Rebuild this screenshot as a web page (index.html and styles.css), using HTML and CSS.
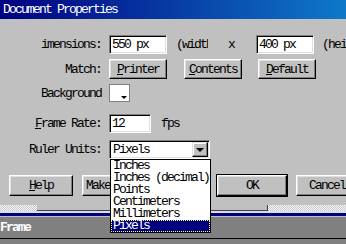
FILE: index.html
```html
<!DOCTYPE html>
<html>

<head>
    <title>Document Properties</title>
    <link rel="stylesheet" href="styles.css">
</head>

<body>
    <div class="titlebar">Document Properties</div>

    <div class="dialog">
        <div class="row">
            <span class="label">imensions:</span>
            <input class="field w58" type="text" value="550 px">
            <span class="note clip">(width)</span>
            <span class="times">x</span>
            <input class="field w58 gap-h" type="text" value="400 px">
            <span class="note">(height)</span>
        </div>

        <div class="row row-match">
            <span class="label">Match:</span>
            <button class="btn w58"><u>P</u>rinter</button>
            <button class="btn w58 gap-c"><u>C</u>ontents</button>
            <button class="btn w58 gap-d"><u>D</u>efault</button>
        </div>

        <div class="row row-bg">
            <span class="label">Background</span>
            <div class="swatch"><span class="swatch-arrow"></span></div>
        </div>

        <div class="row row-rate">
            <span class="label"><u>F</u>rame Rate:</span>
            <input class="field w42" type="text" value="12">
            <span class="unit">fps</span>
        </div>

        <div class="row row-units">
            <span class="label">Ruler Units:</span>
            <div class="select">
                <span class="select-value">Pixels</span>
                <span class="select-btn"><span class="tri"></span></span>
                <ul class="dropdown">
                    <li>Inches</li>
                    <li>Inches (decimal)</li>
                    <li>Points</li>
                    <li>Centimeters</li>
                    <li>Millimeters</li>
                    <li class="selected">Pixels</li>
                </ul>
            </div>
        </div>

        <div class="row button-row">
            <button class="btn btn-help"><u>H</u>elp</button>
            <button class="btn btn-make">Make Default</button>
            <button class="btn btn-ok">OK</button>
            <button class="btn btn-cancel">Cancel</button>
        </div>
    </div>

    <div class="scroll">
        <div class="scroll-thumb"></div>
    </div>
    <div class="rule-light"></div>
    <div class="rule-navy"></div>
    <div class="rule-gap"></div>
    <div class="panel">Frame</div>
    <div class="rule-black"></div>
</body>
</html>
```

FILE: styles.css
```css
* {
    box-sizing: border-box;
}

body {
    margin: 0;
    width: 346px;
    height: 244px;
    overflow: hidden;
    background-color: #808080;
    font-family: "Liberation Mono", "DejaVu Sans Mono", monospace;
    font-size: 13px;
    letter-spacing: -1.8px;
    color: #000;
}

.titlebar {
    height: 19px;
    line-height: 19px;
    padding-left: 3px;
    color: #fff;
    white-space: nowrap;
    background: linear-gradient(to right, #000080, #1084d0 380px);
}

.dialog {
    background-color: #c0c0c0;
    padding-top: 16px;
    padding-bottom: 9px;
}

.row {
    display: flex;
    align-items: center;
    height: 19px;
    white-space: nowrap;
}

.row > * {
    flex: none;
}

.label {
    width: 101px;
    margin-right: 8px;
    text-align: right;
}

.row-match {
    margin-top: 5px;
    height: 20px;
}

.row-bg {
    margin-top: 5px;
    height: 18px;
}

.row-rate {
    margin-top: 12px;
}

.row-units {
    margin-top: 7px;
}

.button-row {
    margin-top: 16px;
    height: 21px;
}

/* sunken edit boxes */
.field {
    height: 19px;
    margin: 0;
    padding: 0 0 0 2px;
    font: inherit;
    letter-spacing: inherit;
    color: #000;
    background-color: #fff;
    border: 1px solid;
    border-color: #808080 #fff #fff #808080;
    box-shadow: inset 1px 1px #000, inset -1px -1px #dfdfdf;
    outline: none;
}

.w58 {
    width: 58px;
}

.w42 {
    width: 42px;
}

.note {
    margin-left: 9px;
}

.note.clip {
    width: 32px;
    overflow: hidden;
}

.times {
    margin-left: 20px;
    width: 6px;
}

.gap-h {
    margin-left: 22px;
}

.gap-h + .note {
    margin-left: 8px;
}

.unit {
    margin-left: 10px;
}

/* raised push buttons */
.btn {
    height: 20px;
    margin: 0;
    padding: 0;
    font: inherit;
    letter-spacing: inherit;
    color: #000;
    background-color: #c0c0c0;
    border: 1px solid;
    border-color: #fff #000 #000 #fff;
    box-shadow: inset -1px -1px #808080, inset 1px 1px #dfdfdf;
    white-space: nowrap;
}

.gap-c {
    margin-left: 17px;
}

.gap-d {
    margin-left: 16px;
}

.button-row .btn {
    height: 21px;
}

.btn-help {
    margin-left: 9px;
    width: 64px;
}

.btn-make {
    margin-left: 9px;
    width: 125px;
    text-align: left;
    padding-left: 3px;
}

.btn-ok {
    margin-left: 10px;
    width: 70px;
    outline: 1px solid #000;
}

.btn-cancel {
    margin-left: 9px;
    width: 62px;
}

/* colour chip */
.swatch {
    position: relative;
    width: 21px;
    height: 18px;
    background-color: #fff;
    border: 1px solid #808080;
}

.swatch-arrow {
    position: absolute;
    right: 2px;
    bottom: 2px;
    border-left: 3px solid transparent;
    border-right: 3px solid transparent;
    border-top: 3px solid #000;
}

/* ruler units combo */
.select {
    position: relative;
    display: flex;
    align-items: center;
    width: 101px;
    height: 19px;
    padding-left: 3px;
    background-color: #fff;
    border: 1px solid;
    border-color: #808080 #fff #fff #808080;
    box-shadow: inset 1px 1px #000, inset -1px -1px #dfdfdf;
}

.select-value {
    flex: 1;
}

.select-btn {
    display: flex;
    align-items: center;
    justify-content: center;
    width: 16px;
    height: 15px;
    margin-right: 1px;
    background-color: #c0c0c0;
    border: 1px solid;
    border-color: #dfdfdf #000 #000 #dfdfdf;
    box-shadow: inset -1px -1px #808080, inset 1px 1px #fff;
}

.tri {
    border-left: 4px solid transparent;
    border-right: 4px solid transparent;
    border-top: 4px solid #000;
}

.dropdown {
    position: absolute;
    left: 0;
    top: 18px;
    z-index: 2;
    width: 101px;
    margin: 0;
    padding: 0;
    list-style: none;
    background-color: #fff;
    border: 1px solid #000;
}

.dropdown li {
    height: 12px;
    line-height: 12px;
    padding-left: 2px;
    white-space: nowrap;
}

.dropdown li.selected {
    color: #fff;
    background-color: #000080;
    outline: 1px dotted #ffff80;
    outline-offset: -1px;
}

/* underlying window strip */
.scroll {
    display: flex;
    height: 6px;
    padding-left: 37px;
    background: repeating-conic-gradient(#c0c0c0 0 25%, #fff 0 50%) 0 0 / 2px 2px;
}

.scroll-thumb {
    width: 231px;
    background-color: #c0c0c0;
    border-right: 1px solid #404040;
    border-bottom: 1px solid #404040;
}

.rule-light {
    height: 2px;
    background-color: #dfdfdf;
}

.rule-navy {
    height: 3px;
    background-color: #000080;
}

.rule-gap {
    height: 1px;
    background-color: #c0c0c0;
}

.panel {
    height: 21px;
    line-height: 21px;
    color: #fff;
    font-weight: bold;
    background-color: #808080;
}

.rule-black {
    height: 1px;
    background-color: #000;
}
```
